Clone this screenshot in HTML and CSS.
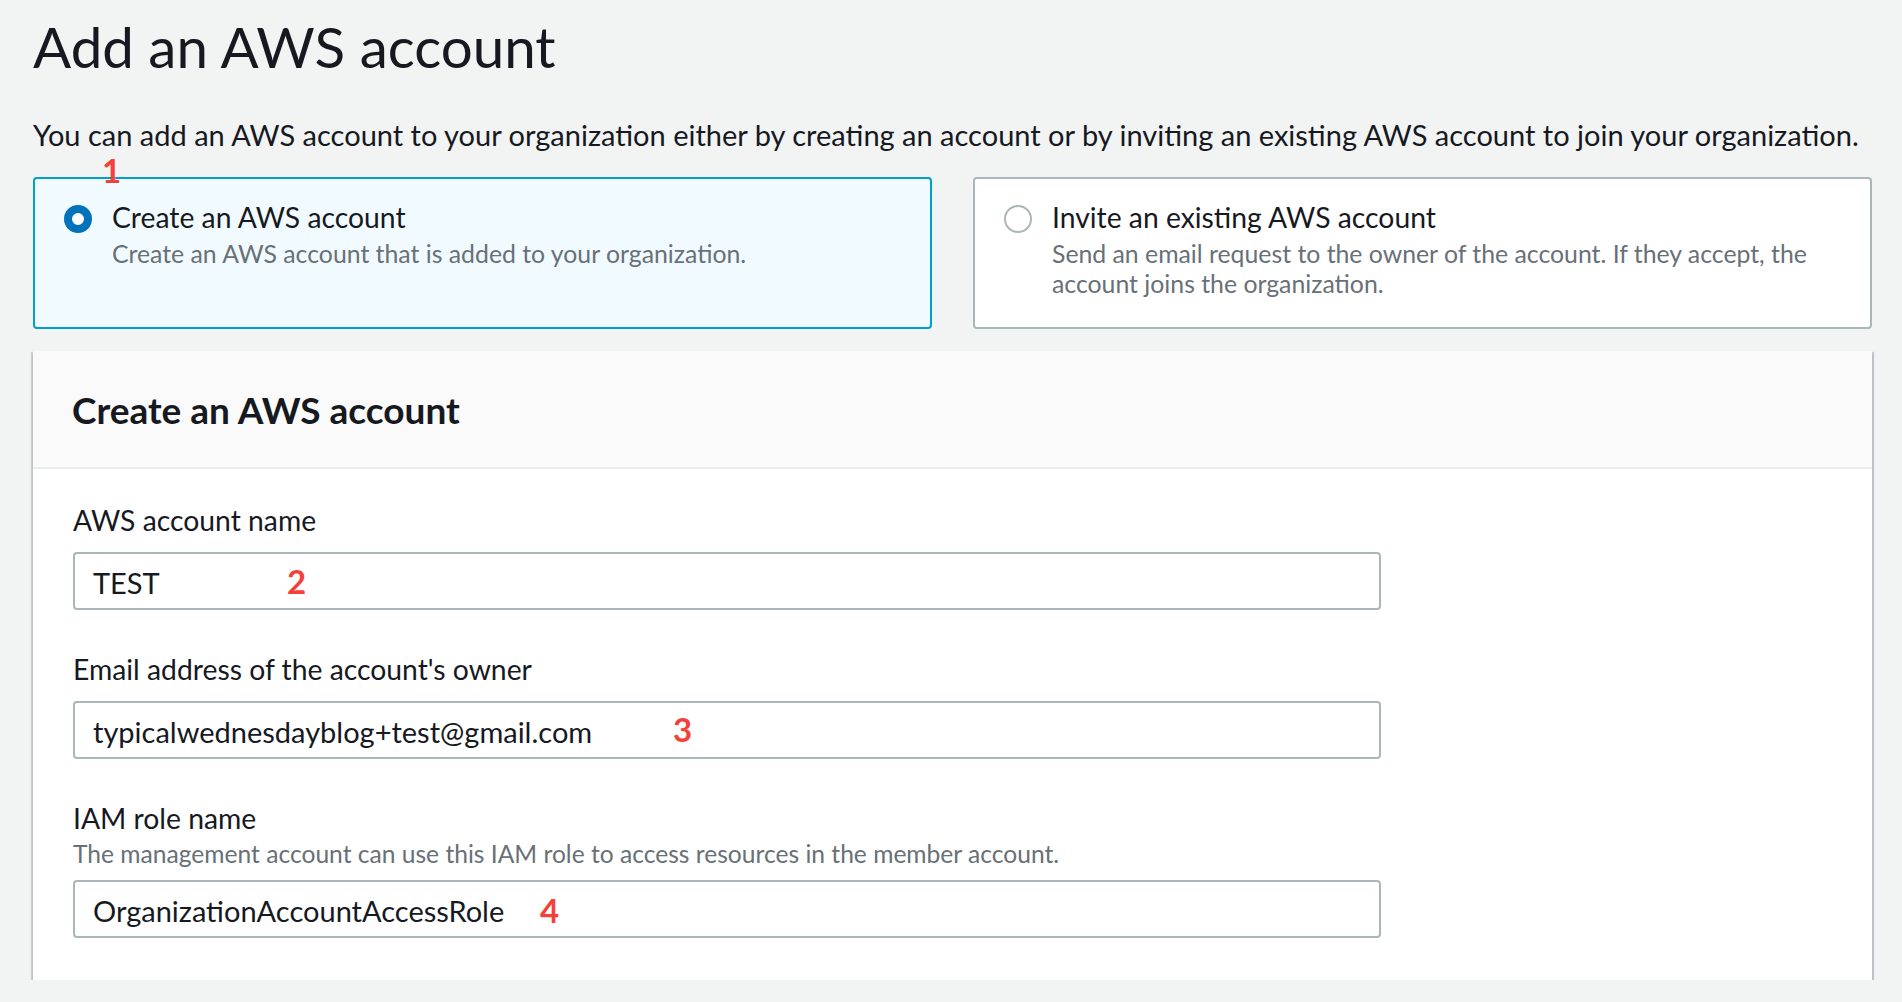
FILE: index.html
```html
<!DOCTYPE html>
<html lang="en">
<head>
<meta charset="utf-8">
<title>Add an AWS account</title>
<link rel="stylesheet" href="styles.css">
</head>
<body>
<main class="page">
  <h1 class="title">Add an AWS account</h1>
  <p class="intro">You can add an AWS account to your organization either by creating an account or by inviting an existing AWS account to join your organization.</p>

  <div class="choices">
    <span class="marker marker-1">1</span>
    <div class="choice choice--selected">
      <span class="radio radio--checked"></span>
      <div class="choice-text">
        <div class="choice-label">Create an AWS account</div>
        <div class="choice-desc">Create an AWS account that is added to your organization.</div>
      </div>
    </div>
    <div class="choice">
      <span class="radio"></span>
      <div class="choice-text">
        <div class="choice-label">Invite an existing AWS account</div>
        <div class="choice-desc">Send an email request to the owner of the account. If they accept, the account joins the organization.</div>
      </div>
    </div>
  </div>

  <section class="panel">
    <header class="panel-header">
      <h2 class="panel-title">Create an AWS account</h2>
    </header>
    <div class="panel-body">
      <div class="field">
        <div class="field-label">AWS account name</div>
        <div class="input-wrap">
          <div class="input">TEST</div>
          <span class="marker marker-2">2</span>
        </div>
      </div>
      <div class="field">
        <div class="field-label">Email address of the account's owner</div>
        <div class="input-wrap">
          <div class="input">typicalwednesdayblog+test@gmail.com</div>
          <span class="marker marker-3">3</span>
        </div>
      </div>
      <div class="field">
        <div class="field-label">IAM role name</div>
        <div class="field-hint">The management account can use this IAM role to access resources in the member account.</div>
        <div class="input-wrap input-wrap--after-hint">
          <div class="input">OrganizationAccountAccessRole</div>
          <span class="marker marker-4">4</span>
        </div>
      </div>
    </div>
  </section>
</main>
</body>
</html>
```
FILE: styles.css
```css
html, body {
  margin: 0;
  padding: 0;
  background: #f2f3f3;
}

body {
  font-family: "Lato", "Roboto", "Liberation Sans", sans-serif;
  color: #16191f;
}

.page {
  padding: 12px 30px 0 33px;
}

.title {
  margin: 0;
  font-size: 56.5px;
  line-height: 68px;
  font-weight: 400;
  color: #16191f;
}

.intro {
  margin: 35px 0 0;
  font-size: 29px;
  line-height: 40px;
  white-space: nowrap;
}

/* radio cards */
.choices {
  position: relative;
  margin-top: 22px;
  display: grid;
  grid-template-columns: 1fr 1fr;
  column-gap: 41px;
}

.choice {
  display: flex;
  align-items: flex-start;
  gap: 20px;
  padding: 21px 29px 28px 29px;
  border: 2px solid #aab7b8;
  border-radius: 4px;
  background: #ffffff;
}

.choice--selected {
  border-color: #00a1c9;
  background: #f1faff;
}

.radio {
  flex: none;
  width: 28px;
  height: 28px;
  margin-top: 5px;
  box-sizing: border-box;
  border-radius: 50%;
  border: 2px solid #aab7b8;
  background: #ffffff;
}

.radio--checked {
  border: 8px solid #0073bb;
}

.choice-label {
  font-size: 28.3px;
  line-height: 34px;
  color: #16191f;
}

.choice-desc {
  margin-top: 5px;
  font-size: 24.8px;
  line-height: 30px;
  color: #687078;
}

/* panel */
.panel {
  margin-top: 22px;
  background: #ffffff;
  box-shadow: 0 3px 0 -1px rgba(0, 28, 36, 0.45),
              0 3px 2px 0 rgba(0, 28, 36, 0.2),
              2px 1px 1px 0 rgba(0, 28, 36, 0.18),
              -2px 1px 1px 0 rgba(0, 28, 36, 0.15);
}

.panel-header {
  padding: 37px 40px 35px 39px;
  background: #fafafa;
  border-bottom: 2px solid #eaeded;
}

.panel-title {
  margin: 0;
  font-size: 37px;
  line-height: 44px;
  font-weight: 700;
  color: #16191f;
}

.panel-body {
  padding: 34px 40px 42px 40px;
}

.field + .field {
  margin-top: 42px;
}

.field-label {
  font-size: 28.3px;
  line-height: 34px;
  color: #16191f;
}

.field-hint {
  margin-top: 4px;
  font-size: 24.6px;
  line-height: 30px;
  color: #687078;
}

.input-wrap {
  position: relative;
  width: 1308px;
  margin-top: 15px;
}

.input-wrap--after-hint {
  margin-top: 11px;
}

.input {
  box-sizing: border-box;
  height: 58px;
  padding: 4px 18px 0;
  border: 2px solid #aab7b8;
  border-radius: 4px;
  background: #ffffff;
  font-size: 29px;
  line-height: 50px;
  color: #16191f;
  white-space: nowrap;
}

/* red annotation numbers */
.marker {
  position: absolute;
  font-family: "Lato", "Liberation Sans", sans-serif;
  font-weight: 700;
  font-size: 33px;
  line-height: 33px;
  color: #f5403a;
}

.marker-1 { left: 69px; top: -23px; z-index: 1; }
.marker-2 { left: 214px; top: 13px; }
.marker-3 { left: 600px; top: 12px; }
.marker-4 { left: 467px; top: 14px; }
```
